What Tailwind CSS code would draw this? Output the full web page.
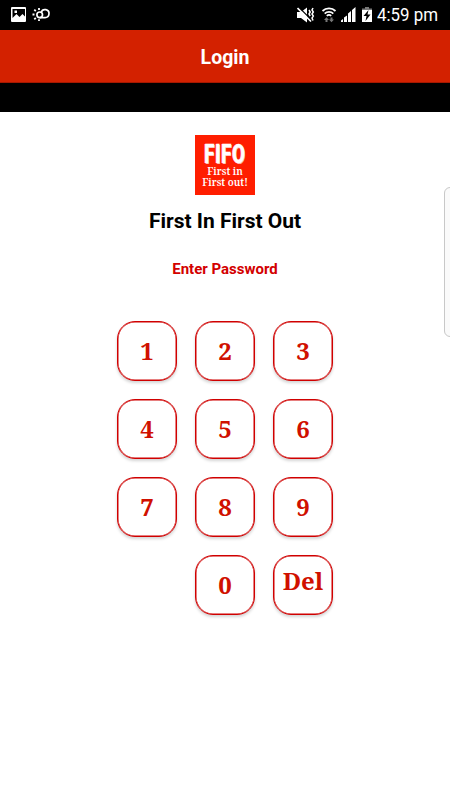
<!DOCTYPE html>
<html lang="en">
<head>
    <meta charset="UTF-8">
    <meta name="viewport" content="width=device-width, initial-scale=1.0">
    <title>Login</title>
    <script src="https://cdn.jsdelivr.net/npm/@tailwindcss/browser@4"></script>
</head>
<body class="bg-white h-[800px] overflow-hidden font-['Roboto',sans-serif]">
    <!-- Status bar -->
    <div class="bg-black h-[30px] flex items-center justify-between pl-[11px] pr-[13px] text-white">
        <svg class="w-10 h-[30px]" viewBox="11 0 40 30" fill="none">
            <path fill="#fff" fill-rule="evenodd" d="M12 7h13a1 1 0 0 1 1 1v13a1 1 0 0 1-1 1H12a1 1 0 0 1-1-1V8a1 1 0 0 1 1-1zm.5 2v9l4-4 3 3 3-3 2.500 2.500V9zm2 1.500h2.500v2.500h-2.500z"/>
            <g stroke="#fff" stroke-width="1.700">
                <circle cx="39.700" cy="14.800" r="2.800"/>
                <path d="M39.700 17.600h5.300a4 4 0 1 0-3.800-5.200"/>
                <path stroke-width="1.800" d="M39 8v2M34.300 9.700l1.500 1.500M32.500 14.500h2M34.300 19.300l1.500-1.500M39 19.300v1.700"/>
            </g>
        </svg>
        <div class="flex items-center">
            <svg class="w-[76px] h-[30px]" viewBox="297 0 76 30" fill="none">
                <path fill="#fff" d="M297 12h4l6-4.500v15l-6-4.500h-4z"/>
                <path stroke="#000" stroke-width="1.200" d="M299 7.500l14 14"/>
                <path stroke="#fff" stroke-width="1.700" d="M297.500 8l13.500 13.500"/>
                <path stroke="#fff" stroke-width="1.500" d="M309 10l1.200 2-1.200 2 1.200 2M313 8l-1 2 1.300 2-1.300 2 1.300 2-1.300 2 1 2.500"/>
                <g stroke="#fff" stroke-width="1.800">
                    <path d="M322.500 11a9.500 9.500 0 0 1 13 0M324.700 13.600a6.200 6.200 0 0 1 8.600 0M326.800 15.900a3.300 3.300 0 0 1 4.400 0"/>
                </g>
                <path fill="#777" d="M324 20l2.500-2.800 2.500 2.800h-1.500v2h-2v-2zM329 19.500h1.500v-2h2v2h1.500l-2.500 2.800z"/>
                <path fill="#fff" d="M341 22v-1.500l2-1.500v3zM344 22v-4.500l3-2V22zM348 22v-8.500l3-2.500v11zM352 22V10l3.500-3v15z"/>
                <path fill="#777" d="M365 7h4v1.500h3V10h-10V8.500h3z"/>
                <path fill="#fff" d="M362 10h10v12h-10z"/>
                <path fill="#000" d="M368.500 10l-5 6h3l-1 5 5-6.500h-3z"/>
            </svg>
            <span class="w-[60px] ml-1 text-[19px] leading-[30px] whitespace-nowrap origin-left scale-x-[0.89]">4:59 pm</span>
        </div>
    </div>

    <!-- Header -->
    <header class="h-[53px] bg-[#d32100] border-b border-[#a51800] flex items-center justify-center pt-[3px] text-white text-[19.500px] font-bold">Login</header>
    <div class="h-[29px] bg-black"></div>

    <main class="flex flex-col items-center pt-[23px]">
        <!-- Logo -->
        <div class="size-[60px] bg-[#ff1e00] text-white flex flex-col items-center pt-[9px] whitespace-nowrap">
            <div class="text-[25px] leading-[22px] font-bold tracking-[1px] scale-x-[0.74] [-webkit-text-stroke:0.400px_#fff] [text-shadow:-1px_0_0_#ffc8c0,1px_1px_0_#ffb0a6]">FIFO</div>
            <div class="text-[10px] leading-[11px] font-['Noto_Serif',serif] font-semibold">First in</div>
            <div class="text-[10px] leading-[11px] font-['Noto_Serif',serif] font-semibold">First out!</div>
        </div>
        <h1 class="mt-[11px] text-[21px] leading-[30px] font-bold text-black">First In First Out</h1>
        <p class="mt-[23px] text-[15px] leading-5 font-bold text-[#d30000]">Enter Password</p>

        <!-- Keypad -->
        <div id="keypad" class="mt-[42px] grid grid-cols-3 gap-[18px] text-[#d01000] font-bold text-[24px] font-['Noto_Serif',serif]">
            <button class="size-[60px] rounded-[18px] border border-[#d00000] bg-white shadow-[inset_0_0_0_0.500px_#d00000,0_2px_3px_rgba(0,0,0,0.17)]">1</button>
            <button class="size-[60px] rounded-[18px] border border-[#d00000] bg-white shadow-[inset_0_0_0_0.500px_#d00000,0_2px_3px_rgba(0,0,0,0.17)]">2</button>
            <button class="size-[60px] rounded-[18px] border border-[#d00000] bg-white shadow-[inset_0_0_0_0.500px_#d00000,0_2px_3px_rgba(0,0,0,0.17)]">3</button>
            <button class="size-[60px] rounded-[18px] border border-[#d00000] bg-white shadow-[inset_0_0_0_0.500px_#d00000,0_2px_3px_rgba(0,0,0,0.17)]">4</button>
            <button class="size-[60px] rounded-[18px] border border-[#d00000] bg-white shadow-[inset_0_0_0_0.500px_#d00000,0_2px_3px_rgba(0,0,0,0.17)]">5</button>
            <button class="size-[60px] rounded-[18px] border border-[#d00000] bg-white shadow-[inset_0_0_0_0.500px_#d00000,0_2px_3px_rgba(0,0,0,0.17)]">6</button>
            <button class="size-[60px] rounded-[18px] border border-[#d00000] bg-white shadow-[inset_0_0_0_0.500px_#d00000,0_2px_3px_rgba(0,0,0,0.17)]">7</button>
            <button class="size-[60px] rounded-[18px] border border-[#d00000] bg-white shadow-[inset_0_0_0_0.500px_#d00000,0_2px_3px_rgba(0,0,0,0.17)]">8</button>
            <button class="size-[60px] rounded-[18px] border border-[#d00000] bg-white shadow-[inset_0_0_0_0.500px_#d00000,0_2px_3px_rgba(0,0,0,0.17)]">9</button>
            <button class="col-start-2 size-[60px] rounded-[18px] border border-[#d00000] bg-white shadow-[inset_0_0_0_0.500px_#d00000,0_2px_3px_rgba(0,0,0,0.17)]">0</button>
            <button class="size-[60px] rounded-[18px] border border-[#d00000] bg-white shadow-[inset_0_0_0_0.500px_#d00000,0_2px_3px_rgba(0,0,0,0.17)] pb-[8px]">Del</button>
        </div>
    </main>

    <!-- Edge panel handle -->
    <div class="absolute left-[444px] top-[187px] w-3 h-[150px] rounded-[6px] border border-[#c8c8c8] bg-[#fafafa]"></div>
</body>
</html>
